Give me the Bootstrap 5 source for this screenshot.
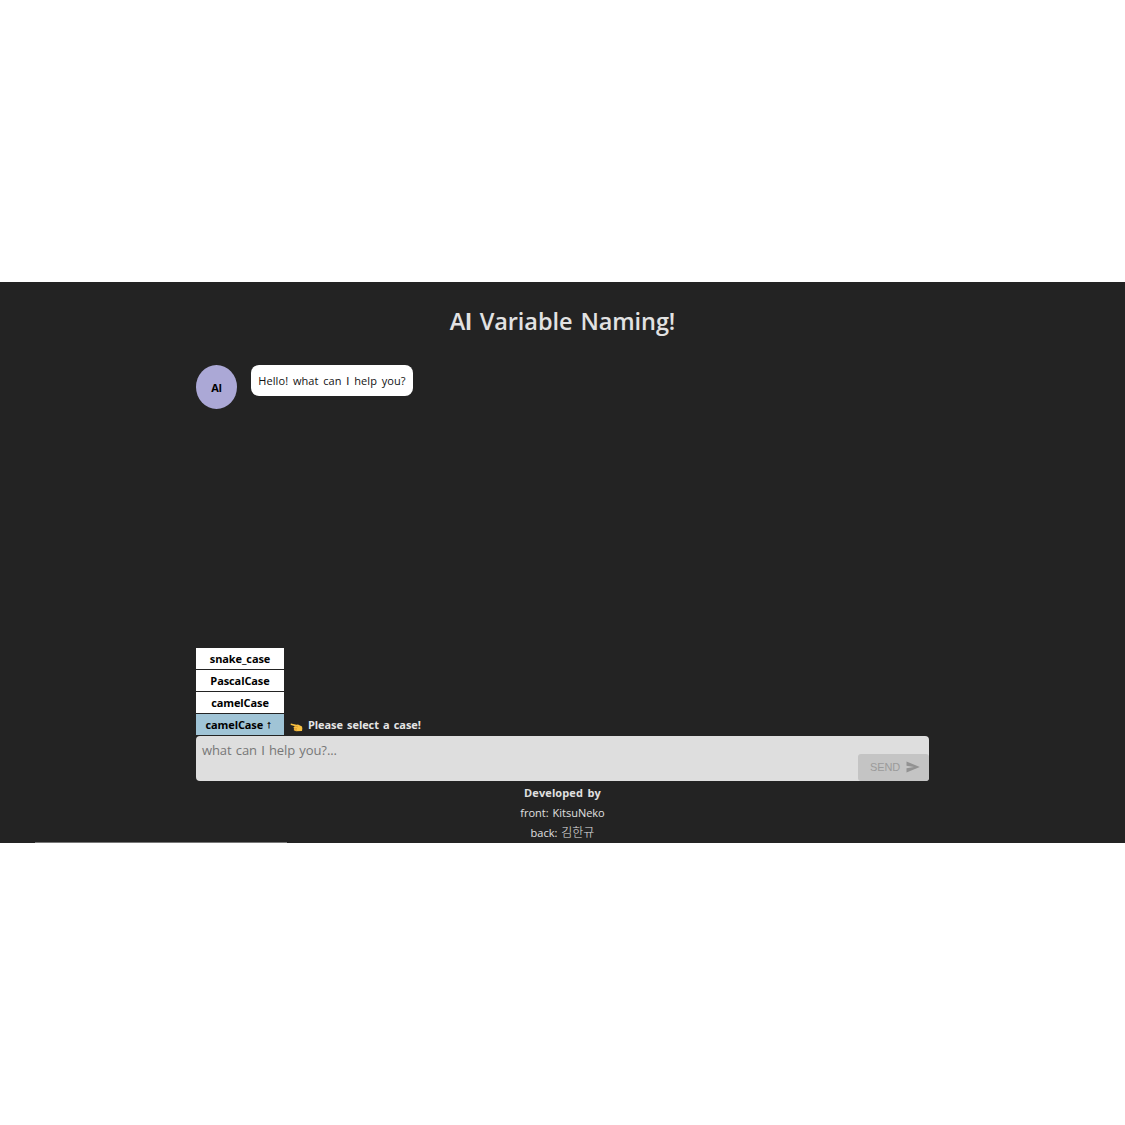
<!DOCTYPE html>
<html lang="en">
<head>
<meta charset="utf-8">
<title>AI Variable Naming!</title>
<link href="https://cdn.jsdelivr.net/npm/bootstrap@5.3.0/dist/css/bootstrap.min.css" rel="stylesheet">
<style>
body{height:1125px;padding-top:282px;background:#fff;overflow:hidden;font-family:"Open Sans","Noto Sans CJK KR",sans-serif;font-size:11px;line-height:16px}
.app{height:561px;background:#232323;color:#e0e0e0}
.plain-i{font-family:"Liberation Sans",Arial,sans-serif}
.title{height:83px;padding-top:23px;font:600 23.5px/32px "Open Sans",sans-serif;word-spacing:2px;letter-spacing:-.08px;color:#e2e2e2}
.title .plain-i{font-weight:700}
.chat{width:733px}
.messages{height:283px}
.avatar{width:41px;height:44px;background:#aba8d6;color:#000;padding-top:2px}
.bubble{margin-left:14px;width:162px;height:31px;border-radius:8px;background:#fff;color:#111;word-spacing:1.8px;letter-spacing:.08px;padding-top:2px}
.cases{width:88px}
.case{height:21px;margin-bottom:1px;background:#fff;color:#000;font-weight:700;line-height:22px;letter-spacing:-.1px}
.case.current{line-height:23px;background:#a0c4d6;padding-right:3px}
.arrow{font:400 11px/1 "Liberation Sans",sans-serif;margin-left:3px;-webkit-text-stroke:.3px #000}
.hint{margin-left:6px;height:22px;font-weight:700;color:#e5e5e5;word-spacing:1.4px;letter-spacing:-.08px}
.hint svg{margin:5px 5px 0 0}
.prompt{height:45px;border-radius:4px;background:#dedede;color:#777;font-size:13px;line-height:18px;letter-spacing:-.1px;word-spacing:1px}
.prompt-text{padding:5px 0 0 6px}
.send{width:71px;height:27px;border:0;border-radius:3px;background:#c4c4c4;color:#9b9b9b;font:11px/27px "Liberation Sans",Arial,sans-serif;padding:0 9px 0 12px;letter-spacing:-.1px}
.credits{padding-top:3px;line-height:19.5px;word-spacing:1px}
.credits .fw-bold{margin-top:-1px;margin-bottom:1px;letter-spacing:.1px;word-spacing:1.5px}
.korean{font-size:12px;line-height:1;font-weight:300}
.edge{height:1px;width:252px;margin-left:35px;background:#777}
</style>
</head>
<body>
<main class="app d-flex flex-column align-items-center">
<h1 class="title m-0 text-center">A<span class="plain-i">I</span> Variable Naming!</h1>
<section class="chat">
<div class="messages d-flex align-items-start">
<div class="avatar rounded-circle d-flex align-items-center justify-content-center fw-bold">A<span class="plain-i">I</span></div>
<div class="bubble d-flex align-items-center justify-content-center text-nowrap"><span>Hello! what can <span class="plain-i">I</span> help you?</span></div>
</div>
<div class="d-flex align-items-end">
<div class="cases text-center">
<div class="case">snake_case</div>
<div class="case">PascalCase</div>
<div class="case">camelCase</div>
<div class="case current d-flex align-items-center justify-content-center">camelCase<span class="arrow">↑</span></div>
</div>
<div class="hint d-flex align-items-center"><svg width="13" height="9" viewBox="0 0 13 9"><path d="M.4 1.1Q.7.4 2 .7L6.500 1.700 8 1.600 12 3.500Q12.700 5 12 8L6 8.300 3.800 7.200 4 5.700 3.500 4.300 5 3.200 1 2.100Z" fill="#f8c040"/><path d="M4 5.700h3M4.500 7.100H7M5 3.300l3 .5" stroke="#c98323" stroke-width=".5" fill="none"/></svg><span>Please select a case!</span></div>
</div>
<div class="prompt d-flex justify-content-between">
<span class="prompt-text">what can <span class="plain-i">I</span> help you?...</span>
<button class="send d-flex align-items-center justify-content-between align-self-end" disabled>SEND <svg width="14" height="12" viewBox="0 0 14 12"><path d="M.5.5 13.800 6 .5 11.500V7.300L8 6 .5 4.700Z" fill="#929292"/></svg></button>
</div>
</section>
<footer class="credits text-center flex-grow-1"><div class="fw-bold">Developed by</div><div>front: KitsuNeko</div><div>back: <span class="korean">김한규</span></div></footer>
<div class="edge align-self-start"></div>
</main>
<script src="https://cdn.jsdelivr.net/npm/bootstrap@5.3.0/dist/js/bootstrap.bundle.min.js"></script>
</body>
</html>
